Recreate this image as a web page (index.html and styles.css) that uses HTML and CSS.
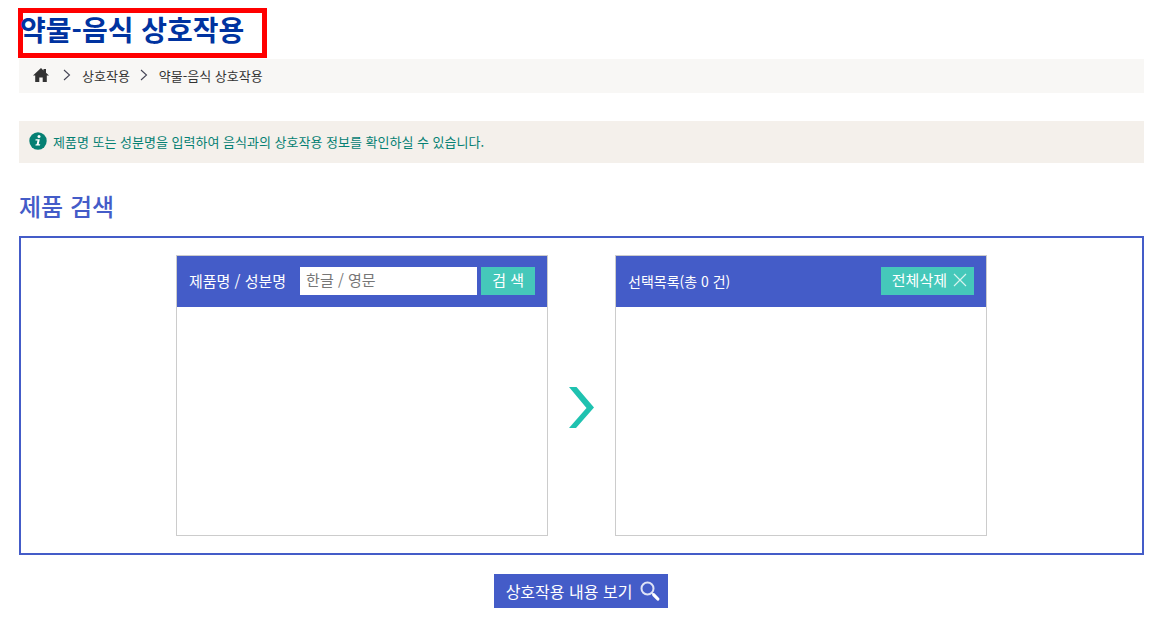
FILE: index.html
```html
<!DOCTYPE html>
<html lang="ko">
<head>
<meta charset="utf-8">
<title>약물-음식 상호작용</title>
<link rel="stylesheet" href="styles.css">
</head>
<body>

<h1 class="page-title">약물-음식 상호작용</h1>

<nav class="breadcrumb">
  <a class="home" href="#" aria-label="홈">
    <svg width="16" height="14" viewBox="0 0 16 14"><path fill="#333" d="M8 0L10.500 2.400V1H13V4.800L16 7.600H13.800V14H9.700V9.400H6.300V14H2.200V7.600H0Z"/></svg>
  </a>
  <svg class="sep" width="8" height="12" viewBox="0 0 8 12"><path fill="none" stroke="#445" stroke-width="1.1" d="M1 1L6.500 6L1 11"/></svg>
  <a href="#">상호작용</a>
  <svg class="sep" width="8" height="12" viewBox="0 0 8 12"><path fill="none" stroke="#445" stroke-width="1.1" d="M1 1L6.500 6L1 11"/></svg>
  <a href="#">약물-음식 상호작용</a>
</nav>

<p class="notice">
  <svg width="18" height="18" viewBox="0 0 18 18">
    <circle cx="9" cy="9" r="8.700" fill="#058073"/>
    <circle cx="10" cy="4.600" r="1.500" fill="#fff"/>
    <path fill="#fff" d="M6.600 7.200H10.800L9.700 12.200H11.200L11 13.400H6.400L6.700 12.200H7.700L8.500 8.400H6.400Z"/>
  </svg>
  제품명 또는 성분명을 입력하여 음식과의 상호작용 정보를 확인하실 수 있습니다.
</p>

<h2 class="section-title">제품 검색</h2>

<form>
  <div class="search-box">
    <div class="panel">
      <div class="panel-header">
        <label for="keyword">제품명 / 성분명</label>
        <input type="text" id="keyword" placeholder="한글 / 영문">
        <button type="button" class="btn">검 색</button>
      </div>
    </div>
    <svg class="arrow" width="25" height="41" viewBox="0 0 25 41"><path fill="#1fc2b0" d="M0 0H7.500L25 20.500L7 41H0L17.500 21Z"/></svg>
    <div class="panel">
      <div class="panel-header selected">
        <span>선택목록(총 0 건)</span>
        <button type="button" class="btn btn-clear">전체삭제
          <svg width="14" height="14" viewBox="0 0 14 14"><path stroke="#d5f3ee" stroke-width="1.2" d="M1 1L13 13M13 1L1 13"/></svg>
        </button>
      </div>
    </div>
  </div>

  <div class="actions">
    <button type="button" class="view-button">상호작용 내용 보기
      <svg width="20" height="20" viewBox="0 0 20 20">
        <circle cx="7.500" cy="7.500" r="6" fill="none" stroke="#dfe3f6" stroke-width="2"/>
        <path stroke="#dfe3f6" stroke-width="1.600" d="M11.500 11.500L14 14"/>
        <path stroke="#fff" stroke-width="3.200" stroke-linecap="round" d="M13.800 13.800L17.800 18"/>
      </svg>
    </button>
  </div>
</form>

</body>
</html>
```
FILE: styles.css
```css
body {
  margin:8px 16px 24px 18px;
  background:#fff;
  color:#333;
  font-family:"Noto Sans CJK KR", sans-serif;
  font-size:13px;
}

a {
  color:#333;
  text-decoration:none;
}

input, button {
  font-family:inherit;
  border:0;
  border-radius:0;
  box-sizing:border-box;
}

svg {
  flex:none;
}

.page-title {
  width:max-content;
  margin:0;
  padding:0 18px 8px 0;
  border:5px solid #f00;
  color:#0033a0;
  font-size:28px;
  line-height:32px;
  text-indent:-3px;
}

.breadcrumb {
  display:flex;
  align-items:center;
  box-sizing:border-box;
  height:34px;
  margin:1px 0 0 1px;
  padding:0 0 2px 14px;
  background:#f8f7f5;
}

.home {
  display:flex;
}

.sep {
  margin:0 11px 0 14px;
}

.sep ~ .sep {
  margin-left:10px;
}

.notice {
  display:flex;
  align-items:center;
  gap:6px;
  box-sizing:border-box;
  height:42px;
  margin:28px 0 0 1px;
  padding:0 0 2px 10px;
  background:#f4f0eb;
  color:#058073;
}

.section-title {
  margin:27px 0 14px 1px;
  color:#445cc8;
  font-size:24px;
  font-weight:500;
  line-height:32px;
}

.search-box {
  display:flex;
  justify-content:center;
  gap:21px;
  margin-left:1px;
  padding:17px 0;
  border:2px solid #445cc8;
}

.panel {
  box-sizing:border-box;
  width:372px;
  min-height:281px;
  border:1px solid #ccc;
}

.panel-header {
  display:flex;
  align-items:center;
  box-sizing:border-box;
  height:51px;
  padding:0 12px 2px;
  background:#445cc8;
  color:#fff;
  font-size:15px;
}

.panel-header input {
  flex:1;
  min-width:0;
  height:28px;
  margin:0 4px 0 14px;
  padding:0 6px 2px;
  background:#fff;
  font-size:15px;
}

.panel-header input::placeholder {
  color:#777;
}

.selected {
  justify-content:space-between;
  font-size:14px;
}

.btn {
  display:flex;
  align-items:center;
  height:28px;
  padding:0 11px 2px;
  background:#45c8ba;
  color:#fff;
  font-size:15px;
}

.btn-clear {
  gap:6px;
  padding:0 7px 2px 11px;
}

.arrow {
  align-self:center;
  margin-top:24px;
}

.actions {
  display:flex;
  justify-content:center;
  margin-top:19px;
}

.view-button {
  display:flex;
  align-items:center;
  gap:8px;
  height:34px;
  padding:0 8px 0 12px;
  background:#445cc8;
  color:#fff;
  font-size:16px;
}
```
